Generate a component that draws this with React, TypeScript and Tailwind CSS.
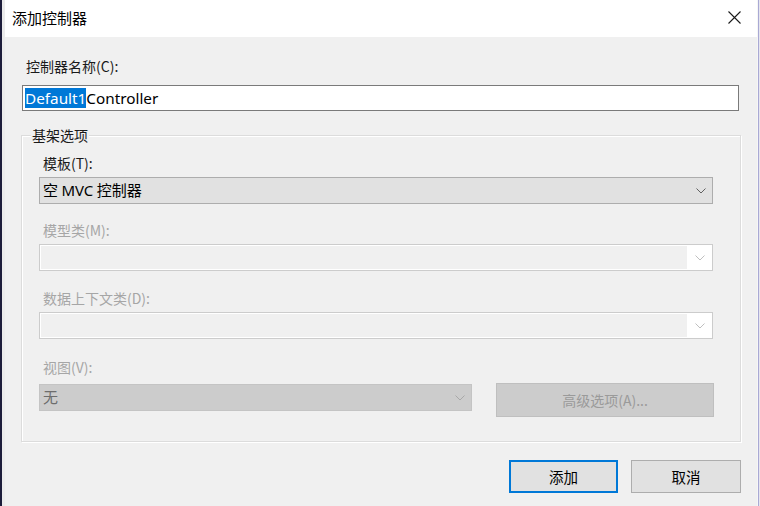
import React from 'react'

const FONT = '"Segoe UI", "Noto Sans", "Noto Sans CJK SC", sans-serif'
const CJK = '"Microsoft YaHei", "Noto Sans CJK SC", sans-serif'

function Chevron({ color = '#606060' }: { color?: string }) {
  return (
    <svg width="10" height="6" viewBox="0 0 10 6" fill="none">
      <path d="M0.5 0.5 L5 5 L9.5 0.5" stroke={color} strokeWidth="1" />
    </svg>
  )
}

function DisabledCombo() {
  return (
    <div className="flex h-[27px] w-[674px] border border-[#cccccc] bg-white">
      <div className="flex-1 bg-[#f0f0f0] border border-white" />
      <div className="flex w-[24px] items-center justify-center">
        <Chevron color="#bfbfbf" />
      </div>
    </div>
  )
}

export default function App() {
  return (
    <div className="flex h-[506px] w-[760px] overflow-hidden bg-[#f0f0f0]" style={{ fontFamily: CJK }}>
      {/* desktop edge behind the dialog */}
      <div className="w-[2px] bg-[#1c1c3a]" />
      <div className="w-[3px] bg-[#ebebeb]" />

      <div className="flex flex-1 flex-col">
        {/* title bar */}
        <div className="flex h-[37px] items-center justify-between bg-white pl-[7px] pr-[16px]">
          <span className="text-[15px] text-black">添加控制器</span>
          <svg width="13" height="13" viewBox="0 0 13 13" className="mt-[-3px]">
            <path d="M0.5 0.5 L12.5 12.5 M12.5 0.5 L0.5 12.5" stroke="#1a1a1a" strokeWidth="1.1" />
          </svg>
        </div>

        <div className="flex flex-1 flex-col pl-[17px] pr-[14px]">
          <div className="mt-[20px] pl-[4px] text-[14px] leading-[18px] text-[#1a1a1a]">控制器名称(C):</div>
          <div className="mt-[10px] ml-0 flex h-[26px] w-[717px] items-center border border-[#7a7a7a] bg-white pl-[2px]">
            <span
              className="bg-[#0078d7] text-[15.3px] leading-[20px] text-white"
              style={{ fontFamily: FONT }}
            >
              Default1
            </span>
            <span className="text-[15.3px] leading-[20px] text-black" style={{ fontFamily: FONT }}>
              Controller
            </span>
          </div>

          {/* group box */}
          <div className="relative mt-[24px] h-[307px] w-[720px] ml-[-1px] border border-[#dcdcdc] shadow-[inset_1px_1px_0_#ffffff,1px_1px_0_#ffffff]">
            <span className="absolute left-[9px] top-[-10px] bg-[#f0f0f0] px-[1px] text-[14px] leading-[18px] text-[#1a1a1a]">
              基架选项
            </span>

            <div className="flex flex-col pl-[17px]">
              <div className="mt-[18px] pl-[4px] text-[14px] leading-[18px] text-[#1a1a1a]">模板(T):</div>
              <div className="mt-[5px] flex h-[27px] w-[674px] items-center justify-between border border-[#adadad] bg-[#e1e1e1] pl-[3px] pr-[6px]">
                <span className="text-[15px] text-black" style={{ fontFamily: CJK }}>
                  空 <span style={{ fontFamily: FONT }}>MVC</span> 控制器
                </span>
                <Chevron />
              </div>

              <div className="mt-[17px] pl-[4px] text-[14px] leading-[18px] text-[#a6a6a6]">模型类(M):</div>
              <div className="mt-[5px]">
                <DisabledCombo />
              </div>

              <div className="mt-[18px] pl-[4px] text-[14px] leading-[18px] text-[#a6a6a6]">数据上下文类(D):</div>
              <div className="mt-[5px]">
                <DisabledCombo />
              </div>

              <div className="mt-[19px] pl-[4px] text-[14px] leading-[18px] text-[#a6a6a6]">视图(V):</div>
              <div className="mt-[7px] flex items-start gap-[24px]">
                <div className="mt-[1px] flex h-[27px] w-[433px] items-center justify-between border border-[#c4c4c4] bg-[#cccccc] pl-[3px] pr-[6px]">
                  <span className="text-[15px] text-[#6d6d6d]">无</span>
                  <Chevron color="#a8a8a8" />
                </div>
                <div className="flex h-[34px] w-[218px] items-center justify-center border border-[#bfbfbf] bg-[#cccccc] text-[14px] text-[#9a9a9a]">
                  高级选项(A)...
                </div>
              </div>
            </div>
          </div>

          {/* footer buttons */}
          <div className="mt-[18px] flex justify-end gap-[13px] pr-[2px]">
            <div className="flex h-[33px] w-[109px] items-center justify-center border-2 border-[#0078d7] bg-[#e1e1e1] text-[14.5px] text-black">
              添加
            </div>
            <div className="flex h-[33px] w-[110px] items-center justify-center border border-[#adadad] bg-[#e1e1e1] text-[14.5px] text-black">
              取消
            </div>
          </div>
        </div>
      </div>

      <div className="w-[1px] bg-[#f6f6f6]" />
      <div className="w-[1px] bg-[#a9a9d4]" />
      <div className="w-[1px] bg-[#e6e6ee]" />
    </div>
  )
}
